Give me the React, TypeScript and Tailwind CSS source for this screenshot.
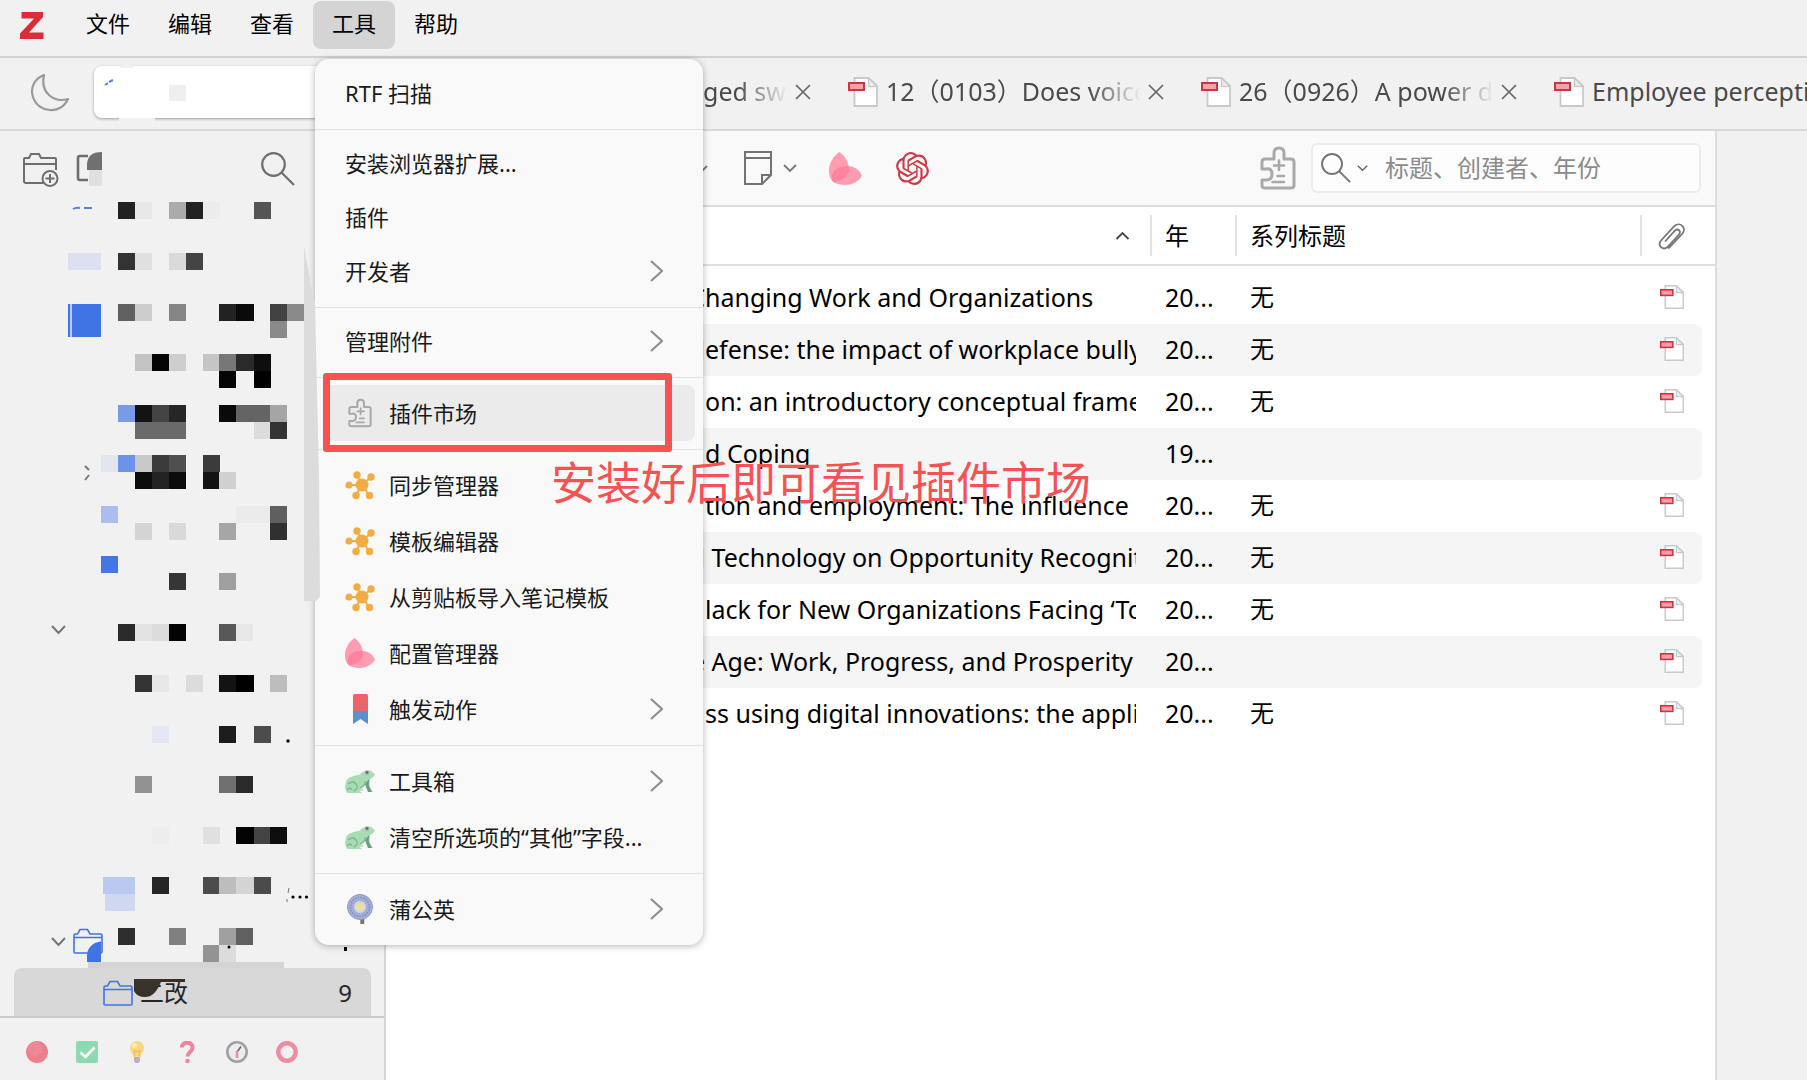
import React from "react";
import { SiOpenai } from "react-icons/si";

const cells: [number, number, string, number?, number?][] = [
  [118, 202, "#222"], [135, 202, "#e8e8e8"], [169, 202, "#ababab"], [186, 202, "#222"], [203, 202, "#ececec"], [254, 202, "#555"],
  [68, 253, "#dbe1f0", 33], [118, 253, "#333"], [135, 253, "#e0e0e0"], [169, 253, "#dadada"], [186, 253, "#444"],
  [68, 304, "#4073e3", 33, 33], [118, 304, "#606060"], [135, 304, "#cdcdcd"], [169, 304, "#868686"], [219, 304, "#222"], [236, 304, "#0a0a0a", 18], [270, 304, "#424242"], [287, 304, "#8a8a8a"], [270, 321, "#8a8a8a"],
  [135, 354, "#c3c3c3"], [152, 354, "#050505"], [169, 354, "#cecece"], [203, 354, "#c5c5c5"], [219, 354, "#777"], [236, 354, "#2a2a2a", 18], [254, 354, "#0e0e0e"], [219, 371, "#050505"], [254, 371, "#000"],
  [118, 405, "#7a9ae8"], [135, 405, "#131313"], [152, 405, "#444"], [169, 405, "#262626"], [219, 405, "#0a0a0a"], [236, 405, "#646464", 34], [270, 405, "#a5a5a5"], [135, 422, "#6a6a6a", 51], [254, 422, "#dcdcdc"], [270, 422, "#333"],
  [101, 455, "#e2e6f1"], [118, 455, "#6d93e8"], [135, 455, "#c9c9c9"], [152, 455, "#3b3b3b"], [169, 455, "#4f4f4f"], [203, 455, "#3b3b3b"], [135, 472, "#0c0c0c"], [152, 472, "#232323"], [169, 472, "#0c0c0c"], [203, 472, "#131313"], [219, 472, "#d0d0d0"],
  [101, 506, "#abbdec"], [236, 506, "#ebebeb", 34], [270, 506, "#5f5f5f"], [135, 523, "#d4d4d4"], [169, 523, "#d9d9d9"], [219, 523, "#a6a6a6"], [270, 523, "#303030"],
  [101, 556, "#4477e2"], [169, 573, "#363636"], [219, 573, "#9f9f9f"],
  [118, 624, "#2a2a2a"], [135, 624, "#e3e3e3"], [152, 624, "#dcdcdc"], [169, 624, "#030303"], [219, 624, "#585858"], [236, 624, "#e7e7e7"],
  [135, 675, "#333"], [152, 675, "#e7e7e7"], [186, 675, "#dcdcdc"], [219, 675, "#131313"], [236, 675, "#000", 18], [270, 675, "#bdbdbd"],
  [152, 726, "#e4e7f4"], [219, 726, "#1d1d1d"], [254, 726, "#4c4c4c"],
  [135, 776, "#929292"], [219, 776, "#707070"], [236, 776, "#2a2a2a"],
  [152, 827, "#ededed"], [203, 827, "#e0e0e0"], [236, 827, "#030303", 18], [254, 827, "#444"], [270, 827, "#0e0e0e"],
  [103, 877, "#b9c9ef", 32], [105, 894, "#cfd8f1", 30], [152, 877, "#262626"], [203, 877, "#4c4c4c"], [219, 877, "#bdbdbd"], [236, 877, "#d4d4d4", 18], [254, 877, "#4b4b4b"],
  [118, 928, "#2e2e2e"], [169, 928, "#808080"], [219, 928, "#a0a0a0"], [236, 928, "#606060"], [203, 945, "#939393"], [219, 945, "#dcdcdc"],
  [88, 962, "#d4d4d4", 196, 6],
];

const FolderShape = ({ x = 0, y = 0 }: { x?: number; y?: number }) => (
  <g transform={`translate(${x} ${y})`} fill="none" stroke="#4073e3" strokeWidth="1.6">
    <path d="M1 24V7.500Q1 6 2.500 6H4.500L7 1.500H14.500L17 6H27.500Q29 6 29 7.500V24Q29 25 28 25H2Q1 25 1 24ZM1 9.500H29" />
  </g>
);

const TreeMosaic = () => (
  <svg width="384" height="772" viewBox="0 196 384 772" className="block" aria-hidden="true">
    {cells.map(([x, y, fill, w = 17, h = 17], i) => (
      <rect key={i} x={x} y={y} width={w} height={h} fill={fill} shapeRendering="crispEdges" />
    ))}
    <path d="M73 209q3-2 7-1M84 208h8" stroke="#5580dd" strokeWidth="2" fill="none" />
    <path d="M71 304v33" stroke="#dfe7fa" strokeWidth="1.500" />
    <path d="M85 466l4 4M89 475l-4 5" stroke="#777" strokeWidth="2" fill="none" />
    <path d="M52 626l6.500 7 6.500-7M52 938l6.500 7 6.500-7" stroke="#777" strokeWidth="2" fill="none" />
    <circle cx="288" cy="741" r="1.700" />
    <circle cx="293" cy="897" r="1.600" /><circle cx="300" cy="897" r="1.600" /><circle cx="306.500" cy="897" r="1.600" />
    <path d="M289 888l-1 5M287 899v3" stroke="#777" />
    <circle cx="229" cy="947" r="1.500" />
    <FolderShape x={73} y={928} />
    <path d="M87 962V955a15 14 0 0 1 14-13.500V962Z" fill="#4073e3" />
    <rect x="344" y="947" width="3" height="4" />
  </svg>
);

const PdfIcon = ({ className }: { className: string }) => (
  <svg viewBox="0 0 30 30" className={className} aria-hidden="true">
    <path d="M6.500 1H20.500L29 9V29H6.500Z" fill="#fff" stroke="#c9c9c9" strokeWidth="1.800" />
    <path d="M20.500 1V9.500H29Z" fill="#ececec" stroke="#c9c9c9" strokeWidth="1.400" />
    <rect x="1" y="6" width="15" height="7" fill="#f7a1a8" stroke="#d03442" strokeWidth="2" />
  </svg>
);

const Puzzle = ({ className }: { className: string }) => (
  <svg viewBox="0 0 36 44" className={className} fill="none" stroke="#a9a9a9" strokeWidth="3" strokeLinejoin="round" strokeLinecap="round" aria-hidden="true">
    <path d="M5 13H14V7Q14 2 19 2T24 7V13H31Q34 13 34 16V39Q34 42 31 42H5Q2 42 2 39V34H6Q12 34 12 28T6 23H2V16Q2 13 5 13Z" />
    <path d="M19 14.500V24M14 19.500H24M17.500 30H24M12.500 36H24" strokeWidth="2.600" />
  </svg>
);

const Petals = ({ className }: { className: string }) => (
  <svg viewBox="0 0 32 32" className={className} fill="#ff7896" fillOpacity=".72" aria-hidden="true">
    <path d="M10 0C-1 8-3 22 4 29C14 28 21 22 19 14C18 7 14 3 10 0Z" />
    <path d="M32 23C28 14 19 12 11 14.500C4 17 1 23 4 29C13 34 26 33 32 23Z" />
  </svg>
);

const Molecule = () => (
  <svg viewBox="0 0 30 30" className="size-[30px]" fill="#f2ac42" stroke="#f2ac42" aria-hidden="true">
    <path d="M4 15H17L12 5M17 15L26 7M17 15L11 25M17 15L24 25" strokeWidth="1.800" fill="none" />
    <g stroke="none"><circle cx="17" cy="15" r="6.500" /><circle cx="4" cy="15" r="3.600" /><circle cx="12" cy="5" r="3.700" /><circle cx="26" cy="7" r="3.700" /><circle cx="11" cy="25.500" r="3.700" /><circle cx="24.500" cy="25.500" r="3.700" /></g>
  </svg>
);

const Ribbon = () => (
  <svg viewBox="0 0 30 30" className="size-[30px]" aria-hidden="true">
    <path d="M8 16H23V30L15.500 25L8 30Z" fill="#5a8fd0" />
    <path d="M9.500 0H21.500Q23 0 23 1.500V17H8V1.500Q8 0 9.500 0Z" fill="#ed6468" />
  </svg>
);

const Frog = () => (
  <svg viewBox="0 0 30 30" className="size-[30px]" aria-hidden="true">
    <path d="M1 16C2 11 9 10 15 8.500C17 6 19 4.500 22 5L25 4.500L30 8C29 11 27 12 25 13C25 16 24 19 25 22L28 26H23L20.500 19L16 22L19 24.500H14L17 27H2L0 22Z" fill="#a9dcb4" />
    <path d="M24 13C24 17 23 19 25 22L27 26H23L20 18Z" fill="#6b9c7c" />
    <path d="M3 18Q8 14 11 18T9 25M15 22Q20 20 20 15M2 24Q5 20 7 24" fill="none" stroke="#7dba8c" strokeWidth="1.300" />
    <circle cx="22" cy="6.500" r="2.300" fill="#97a5a0" /><circle cx="22" cy="6.500" r=".9" fill="#444" />
  </svg>
);

const Dandelion = () => (
  <svg viewBox="0 0 30 30" className="size-[30px]" aria-hidden="true">
    <path d="M15 20L18.500 24V30H16V25Z" fill="#777" stroke="#777" strokeWidth="1.500" />
    <circle cx="15" cy="13" r="12.500" fill="#a6afd6" stroke="#8f98c4" />
    <circle cx="15" cy="13" r="9.500" fill="none" stroke="#7f8cc4" strokeWidth="1.600" strokeDasharray="1.500 1.300" />
    <circle cx="15" cy="13" r="6.500" fill="#ccd6e4" stroke="#8fa0cf" strokeDasharray="1.500 1" />
    <circle cx="15" cy="13" r="3.800" fill="#f6df95" />
  </svg>
);

const Magnifier = ({ className, stroke }: { className: string; stroke: string }) => (
  <svg viewBox="0 0 34 34" className={className} fill="none" stroke={stroke} strokeWidth="2.200" aria-hidden="true">
    <circle cx="12.500" cy="12.500" r="11.300" /><path d="M20.500 20.500L33 33" />
  </svg>
);

const Chevron = ({ className }: { className: string }) => (
  <svg viewBox="0 0 14 8" className={className} fill="none" stroke="currentColor" strokeWidth="1.800" aria-hidden="true"><path d="M1 1L7 7L13 1" /></svg>
);

type Item = { label: string; icon?: React.ReactNode; sub?: boolean; active?: boolean };
const groups: Item[][] = [
  [{ label: "RTF 扫描" }],
  [{ label: "安装浏览器扩展..." }, { label: "插件" }, { label: "开发者", sub: true }],
  [{ label: "管理附件", sub: true }],
  [{ label: "插件市场", icon: <Puzzle className="ml-[3px] h-[30px] w-6" />, active: true }],
  [
    { label: "同步管理器", icon: <Molecule /> },
    { label: "模板编辑器", icon: <Molecule /> },
    { label: "从剪贴板导入笔记模板", icon: <Molecule /> },
    { label: "配置管理器", icon: <Petals className="size-[30px]" /> },
    { label: "触发动作", icon: <Ribbon />, sub: true },
  ],
  [{ label: "工具箱", icon: <Frog />, sub: true }, { label: "清空所选项的“其他”字段...", icon: <Frog /> }],
  [{ label: "蒲公英", icon: <Dandelion />, sub: true }],
];

const ToolsMenu = () => (
  <div role="menu" className="absolute left-[315px] top-[59px] z-20 w-[388px] rounded-[14px] bg-[#f9f9f9] py-2 shadow-[0_1px_7px_rgba(0,0,0,0.3)]">
    {groups.map((group, g) => (
      <div key={g} role="group" className={g ? "mt-2 border-t border-[#e2e2e2] pt-[7px]" : ""}>
        {group.map((item) => (
          <div key={item.label} className="px-2">
            <button
              role="menuitem"
              className={`flex w-full items-center rounded-lg pl-[22px] pr-8 text-left text-[22px] leading-8 text-[#1a1a1a] ${item.icon ? "h-14" : "h-[54px] pb-0.5"} ${item.active ? "bg-[#ebebeb]" : ""}`}
            >
              {item.icon && <span className="mr-3.5 flex w-[30px] shrink-0">{item.icon}</span>}
              <span className="flex-1 whitespace-nowrap">{item.label}</span>
              {item.sub && (
                <svg viewBox="0 0 13 22" className="h-[22px] w-[13px]" fill="none" stroke="#8b8b8b" strokeWidth="2" aria-hidden="true"><path d="M1 1L12 11L1 21" /></svg>
              )}
            </button>
          </div>
        ))}
      </div>
    ))}
  </div>
);

const Tab = ({ label, icon = true, last = false }: { label: React.ReactNode; icon?: boolean; last?: boolean }) => (
  <div className="flex h-full w-[353px] shrink-0 items-center">
    <PdfIcon className={icon ? "mr-2 size-[30px] shrink-0" : "mr-2 size-[30px] shrink-0 opacity-0"} />
    <button className={`w-[255px] shrink-0 overflow-hidden whitespace-nowrap pb-0.5 text-left text-[25px] leading-9 text-[#4a4a4a] ${last ? "" : "[mask-image:linear-gradient(to_right,#000_80%,transparent)]"}`}>
      {label}
    </button>
    <button aria-label="关闭标签页" className="ml-[7px] shrink-0">
      <svg viewBox="0 0 16 16" className="size-4" stroke="#666" strokeWidth="1.700" aria-hidden="true"><path d="M1 1L15 15M15 1L1 15" /></svg>
    </button>
  </div>
);

const rows: [string, string, string, string, boolean][] = [
  ["C", "hanging Work and Organizations", "20...", "无", true],
  ["d", "efense: the impact of workplace bully", "20...", "无", true],
  ["", "on: an introductory conceptual frame", "20...", "无", true],
  ["", "d Coping", "19...", "", false],
  ["", "tion and employment: The influence o", "20...", "无", true],
  ["d", " Technology on Opportunity Recognit", "20...", "无", true],
  ["", "lack for New Organizations Facing ‘To", "20...", "无", true],
  ["e", " Age: Work, Progress, and Prosperity", "20...", "", true],
  ["", "ss using digital innovations: the applic", "20...", "无", true],
];

const TagBar = () => (
  <div className="flex items-center gap-7 border-t-2 border-[#c9c9c9] px-[26px] py-[23px]">
    <button aria-label="红色"><svg viewBox="0 0 22 22" className="block size-[22px]"><circle cx="11" cy="11" r="11" fill="#ec7f8c" /><circle cx="9" cy="8" r="7" fill="#f08f9a" opacity=".6" /></svg></button>
    <button aria-label="完成"><svg viewBox="0 0 22 22" className="block size-[22px]"><rect width="22" height="22" rx="2" fill="#8edab0" /><path d="M4.500 11.500L9.500 16L18.500 6.500" stroke="#fff" strokeWidth="2.600" fill="none" /></svg></button>
    <button aria-label="想法"><svg viewBox="0 0 22 22" className="block size-[22px]"><path d="M11 0a7 7 0 0 1 7 7c0 4-3 5-3.500 9h-7C7 12 4 11 4 7a7 7 0 0 1 7-7Z" fill="#fbd77f" /><path d="M9 15L8 9l3 2 3-2-1 6" fill="none" stroke="#f1b75a" /><circle cx="8.500" cy="4.500" r="2.500" fill="#fdeab5" /><path d="M8 16h6v4l-1.500 2h-3L8 20Z" fill="#bcaec4" /></svg></button>
    <button aria-label="疑问"><svg viewBox="0 0 22 22" className="block size-[22px]" fill="none"><path d="M6 6.500C6 0 16.500 0 16.500 6.500C16.500 11 11.500 11 11.500 15.500" stroke="#f0839f" strokeWidth="4" /><circle cx="11.500" cy="20" r="2.200" fill="#f0839f" /></svg></button>
    <button aria-label="时间"><svg viewBox="0 0 22 22" className="block size-[22px]"><circle cx="11" cy="11" r="9.700" fill="#ececf0" stroke="#a0a0a0" strokeWidth="2.600" /><path d="M11 11L15 5.500" stroke="#666" strokeWidth="1.600" /><path d="M11 10V17" stroke="#e890a5" strokeWidth="2.600" /></svg></button>
    <button aria-label="圆圈"><svg viewBox="0 0 22 22" className="block size-[22px]"><circle cx="11" cy="11" r="8.700" fill="none" stroke="#f28ba1" strokeWidth="4.400" /></svg></button>
  </div>
);

export default function App() {
  return (
    <div className="relative flex min-h-screen flex-col overflow-hidden bg-[#f1f1f1] text-[24px] text-black [font-family:'Noto_Sans','Noto_Sans_CJK_SC',sans-serif]">
      <nav className="flex h-[58px] shrink-0 items-start border-b-2 border-[#d2d2d2] pl-5 pt-px">
        <svg viewBox="0 0 24 27" className="mr-[23px] mt-[11px] h-[27px] w-6" aria-label="Zotero"><path d="M1.500 0H23V5L9 20.500H23.500V27H0V21.500L14 6.500H1.500Z" fill="#dc2c3a" /></svg>
        {["文件", "编辑", "查看", "工具", "帮助"].map((m) => (
          <button key={m} className={`h-12 w-[82px] rounded-lg pb-1 text-[22px] ${m === "工具" ? "bg-[#d4d4d4]" : ""}`}>{m}</button>
        ))}
      </nav>

      <div className="flex h-[73px] shrink-0 items-center overflow-hidden border-b-2 border-[#d8d8d8] pb-[3px]">
        <button aria-label="深色模式" className="ml-[30px] mr-6 shrink-0 pt-0.5">
          <svg viewBox="0 0 40 40" className="block size-10" fill="none" stroke="#999" strokeWidth="2.200" strokeLinejoin="round"><path d="M14 2C4 6 0 15 3 24C8 40 31 42 38 26C24 30 10 20 14 2Z" /></svg>
        </button>
        <div className="relative h-[52px] w-[353px] shrink-0 rounded-lg bg-white shadow-[0_1px_3px_rgba(0,0,0,0.35)]">
          <svg viewBox="0 0 110 70" width="110" height="70" className="absolute left-0 -top-1" aria-hidden="true">
            <path d="M11 23l3-2M15 20l4-2" stroke="#5a7fe0" strokeWidth="2" />
            <path d="M25 6Q33-2 41 6Z" fill="#f1f1f1" />
            <rect x="75" y="23" width="17" height="16" fill="#efefef" />
            <rect x="25" y="56" width="36" height="14" fill="#f1f1f1" />
          </svg>
        </div>
        <div className="ml-12 flex h-full min-w-0 flex-1">
          <Tab label={<span className="pl-[170px]">ged sw</span>} icon={false} />
          <Tab label="12（0103）Does voice" />
          <Tab label="26（0926）A power d" />
          <Tab label="Employee perceptions" last />
        </div>
      </div>

      <div className="flex flex-1">
        <aside className="flex w-[386px] shrink-0 flex-col border-r-2 border-[#d6d6d6]">
          <div className="flex h-[65px] shrink-0 items-center pl-[22px] pr-[89px] pt-[11px]">
            <button aria-label="新建分类" className="pt-1">
              <svg viewBox="0 0 38 36" className="block h-9 w-[38px]" fill="none" stroke="#6e6e6e" strokeWidth="2">
                <path d="M21 30H4Q2 30 2 28V6Q2 5 3 5H7L9 1H17L19 5H33Q34 5 34 6V17M2 11H34" /><circle cx="28" cy="25.500" r="7.500" /><path d="M28 21V30M23.500 25.500H32.500" />
              </svg>
            </button>
            <button aria-label="新建文献库" className="ml-4 pt-px">
              <svg viewBox="0 0 26 36" className="block h-9 w-[26px]">
                <path d="M12 4H4Q2 4 2 6V26Q2 28 4 28H12" fill="none" stroke="#6e6e6e" strokeWidth="2.600" />
                <path d="M11 18V13Q11 0 26 0V18Z" fill="#707070" /><path d="M13 18H26V34H13Z" fill="#e0e0e0" />
              </svg>
            </button>
            <button aria-label="搜索分类" className="ml-auto"><Magnifier className="block size-[34px]" stroke="#6e6e6e" /></button>
          </div>
          <TreeMosaic />
          <button className="ml-3.5 mr-[13px] flex h-12 shrink-0 items-center rounded-t-lg bg-[#d8d8d8] pl-[89px] pr-[19px] pt-0.5 text-[#262626]">
            <svg viewBox="0 0 30 26" className="h-[26px] w-[30px]" aria-hidden="true"><FolderShape /></svg>
            <span className="relative ml-[7px] leading-10">
              二改
              <svg viewBox="0 0 52 18" className="absolute -left-1.5 top-1.5 h-[18px] w-[52px]" aria-hidden="true"><path d="M0 0H28Q22 18 11 18Q3 18 0 12Z" fill="#37332b" /><path d="M26 1.500H51" stroke="#3d2b25" strokeWidth="3" /></svg>
            </span>
            <span className="ml-auto">9</span>
          </button>
          <TagBar />
        </aside>

        <main className="flex min-w-0 flex-1 flex-col bg-white">
          <div className="flex h-[76px] shrink-0 items-center border-b-2 border-[#dcdcdc] bg-[#f9f9f9] pl-[308px] pr-3.5">
            <Chevron className="mt-0.5 h-2 w-3.5 shrink-0 text-[#777]" />
            <button aria-label="新建笔记" className="ml-[36px] flex shrink-0 items-center gap-[11px] text-[#777]">
              <svg viewBox="0 0 28 34" className="h-[34px] w-7" fill="none" stroke="#737373" strokeWidth="2"><path d="M1 1H27V24L18 33H1ZM1 7H27M27 24H18V33" /></svg>
              <Chevron className="h-2 w-3.5" />
            </button>
            <button aria-label="配置" className="ml-8 shrink-0"><Petals className="block size-[33px]" /></button>
            <button aria-label="GPT" className="ml-[34px] shrink-0"><SiOpenai className="block size-[33px] text-[#cc3b48]" /></button>
            <button aria-label="插件市场" className="ml-auto shrink-0"><Puzzle className="block h-11 w-9" /></button>
            <div className="ml-[15px] flex h-[50px] w-[390px] shrink-0 items-center rounded-md border-2 border-[#ececec] bg-[#fdfdfd] pl-2">
              <Magnifier className="size-[30px] shrink-0" stroke="#757575" />
              <Chevron className="ml-1.5 h-2 w-[11px] shrink-0 text-[#666]" />
              <input aria-label="搜索" placeholder="标题、创建者、年份" className="ml-[17px] min-w-0 flex-1 bg-transparent outline-none placeholder:text-[#8b8b8b]" />
            </div>
          </div>

          <table className="w-full table-fixed border-separate border-spacing-0">
            <colgroup><col /><col className="w-[85px]" /><col className="w-[405px]" /><col className="w-[60px]" /><col className="w-[13px]" /></colgroup>
            <thead>
              <tr className="h-[59px] [&>th]:border-b-2 [&>th]:border-[#dfdfdf] [&>th]:p-0 [&>th]:text-left [&>th]:font-normal">
                <th><div className="flex h-[41px] items-center justify-end border-r-2 border-[#e2e2e2] pr-5"><Chevron className="h-2 w-[15px] rotate-180 text-[#444]" /></div></th>
                <th><div className="flex h-[41px] items-center border-r-2 border-[#e2e2e2] pl-[13px]">年</div></th>
                <th><div className="flex h-[41px] items-center border-r-2 border-[#e2e2e2] pl-[13px]">系列标题</div></th>
                <th>
                  <svg viewBox="0 0 28 28" className="mx-auto size-7" fill="none" stroke="#777" strokeWidth="1.800" strokeLinecap="round" role="img" aria-label="附件"><path d="M11 26L24.500 11.500C29 6 22 -1 16.500 4L3 18.500C-1 23.500 5 29 9.500 25L21 12.500C23.500 9 20 6 17 8.500L7.500 19" /></svg>
                </th>
                <th></th>
              </tr>
            </thead>
            <tbody className="text-[25px]">
              <tr className="h-1.5"><td colSpan={5} className="p-0"></td></tr>
              {rows.map(([lead, title, year, series, pdf], i) => (
                <tr key={i} className={`h-[52px] leading-9 [&>td]:p-0 [&>td]:pb-0.5 ${i % 2 ? "[&>td:not(:last-child)]:bg-[#f5f5f5]" : ""}`}>
                  <td>
                    <div className="flex overflow-hidden whitespace-pre pr-4">
                      <span className="w-[319px] shrink-0 text-right">{lead}</span>
                      <span className="min-w-0 flex-1 overflow-hidden">{title}</span>
                    </div>
                  </td>
                  <td className="pl-[13px]!">{year}</td>
                  <td className="pl-[13px]! text-[24px]">{series}</td>
                  <td className="rounded-r-lg">{pdf && <PdfIcon className="mx-auto size-6" />}</td>
                  <td></td>
                </tr>
              ))}
            </tbody>
          </table>
        </main>
        <aside className="w-[92px] shrink-0 border-l-2 border-[#dedede] bg-[#f1f1f1]" />
      </div>

      <ToolsMenu />
      <svg viewBox="0 0 16 354" className="absolute left-[304px] top-[247px] z-30 h-[354px] w-4" aria-hidden="true">
        <path d="M0 0Q5 25 7 40L11 55L15 230L16 350L12 354H0Z" fill="#dcdcdc" />
      </svg>
      <div className="absolute left-[323px] top-[373px] z-30 h-[79px] w-[349px] rounded-[3px] border-[7px] border-[#fa5252]" />
      <p className="absolute left-[551px] top-[450px] z-30 whitespace-nowrap text-[45px] leading-[66px] text-[#f55353]">安装好后即可看见插件市场</p>
    </div>
  );
}
